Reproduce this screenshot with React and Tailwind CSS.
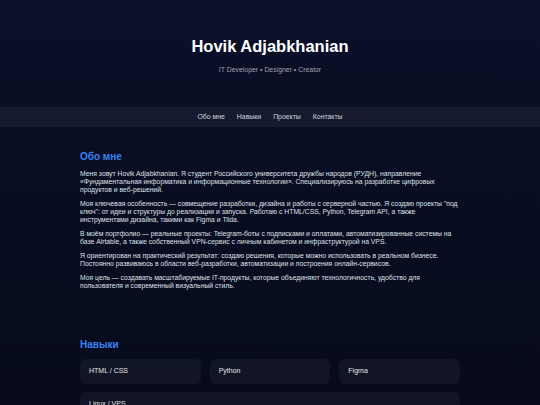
import React from 'react';

const NAV = ['Обо мне', 'Навыки', 'Проекты', 'Контакты'];

const ABOUT = [
  'Меня зовут Hovik Adjabkhanian. Я студент Российского университета дружбы народов (РУДН), направление «Фундаментальная информатика и информационные технологии». Специализируюсь на разработке цифровых продуктов и веб-решений.',
  'Моя ключевая особенность — совмещение разработки, дизайна и работы с серверной частью. Я создаю проекты "под ключ": от идеи и структуры до реализации и запуска. Работаю с HTML/CSS, Python, Telegram API, а также инструментами дизайна, такими как Figma и Tilda.',
  'В моём портфолио — реальные проекты: Telegram-боты с подписками и оплатами, автоматизированные системы на базе Airtable, а также собственный VPN-сервис с личным кабинетом и инфраструктурой на VPS.',
  'Я ориентирован на практический результат: создаю решения, которые можно использовать в реальном бизнесе. Постоянно развиваюсь в области веб-разработки, автоматизации и построения онлайн-сервисов.',
  'Моя цель — создавать масштабируемые IT-продукты, которые объединяют технологичность, удобство для пользователя и современный визуальный стиль.',
];

const SKILLS = ['HTML / CSS', 'Python', 'Figma', 'Linux / VPS'];

export default function App() {
  return (
    <div className="min-h-screen bg-gradient-to-b from-[#0b1029] to-[#060a1a] font-['Liberation_Sans',Arial,sans-serif] text-[#d1d5db]">

      {/* HEADER */}
      <header className="h-[107px] flex flex-col items-center pt-[36px]">
        <h1 className="text-[16.5px] leading-[20px] font-bold text-white">Hovik Adjabkhanian</h1>
        <p className="mt-[10px] text-[6.9px] leading-[8px] text-[#9ca3af]">IT Developer • Designer • Creator</p>
      </header>

      {/* NAV */}
      <nav className="h-[20px] bg-white/5 flex items-center justify-center gap-[12px] text-[6.9px] text-[#d1d5db]">
        {NAV.map(item => (
          <a key={item} href="#" className="hover:text-white">{item}</a>
        ))}
      </nav>

      <main className="w-[380px] mx-auto">
        {/* ABOUT */}
        <section className="pt-[24px] pb-[20px]">
          <h2 className="text-[10px] leading-[12px] font-bold text-[#3b82f6] mb-[7px]">Обо мне</h2>
          {ABOUT.map((p, i) => (
            <p key={i} className="text-[6.8px] leading-[8px] mb-[6px] text-[#dde1e7]">{p}</p>
          ))}
        </section>

        {/* SKILLS */}
        <section className="pt-[23px] pb-[24px]">
          <h2 className="text-[10px] leading-[12px] font-bold text-[#3b82f6] mb-[8px]">Навыки</h2>
          <div className="grid grid-cols-3 gap-[8px_9px]">
            {SKILLS.map((s, i) => (
              <div
                key={s}
                className={`h-[25px] rounded-[6px] bg-white/[0.045] px-[9px] flex items-center text-[7px] text-[#e5e7eb] ${i === 3 ? 'col-span-3' : ''}`}
              >
                {s}
              </div>
            ))}
          </div>
        </section>
      </main>
    </div>
  );
}
